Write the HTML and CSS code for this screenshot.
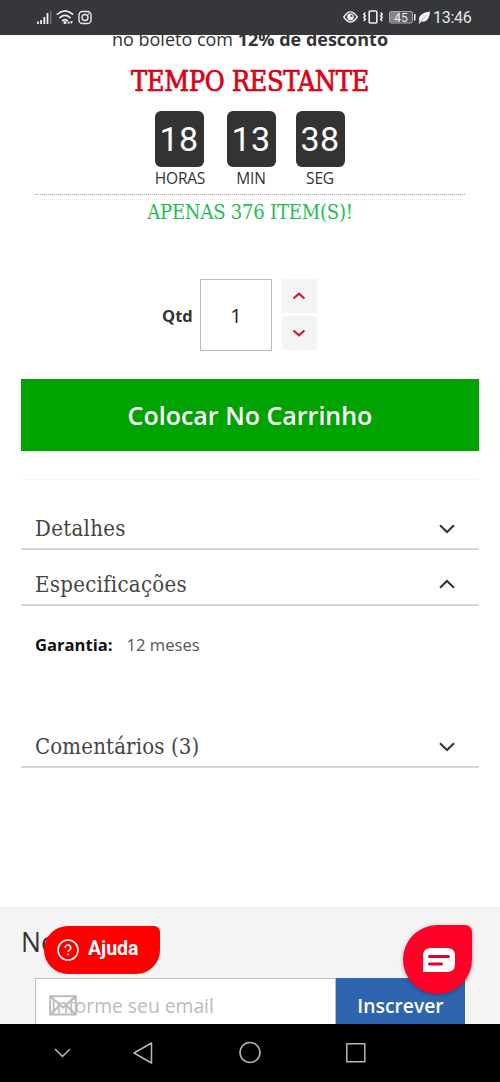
FILE: index.html
```html
<!DOCTYPE html>
<html lang="pt-BR">
<head>
<meta charset="utf-8">
<title>Produto</title>
<link rel="stylesheet" href="styles.css">
</head>
<body>
<div class="phone">
  <header class="status">
    <svg class="status-left" width="56" height="18" viewBox="0 0 56 18" fill="none">
      <g fill="#f2f2f2"><rect x="0" y="12.5" width="1.8" height="2.5"/><rect x="3.2" y="11" width="1.8" height="4"/><rect x="6.4" y="8" width="1.8" height="7"/><rect x="9.6" y="4" width="1.8" height="11"/></g>
      <rect x="13" y="1.500" width="1.400" height="13.500" fill="#707175"/>
      <g stroke="#f2f2f2" stroke-width="1.700" stroke-linecap="round"><path d="M20.500 5.200q7.500-6.600 15 0"/><path d="M23 8.600q5-4.400 10 0"/><path d="M25.700 11.600q2.300-2 4.600 0"/></g>
      <g fill="#f2f2f2"><circle cx="28" cy="13.500" r="1.500"/><path d="M30.200 14.500l1.500-2.500 1.500 2.500zM33 12.200h3l-1.500 2.800z"/></g>
      <g stroke="#ececec" stroke-width="1.400"><rect x="42" y="2.500" width="12" height="12" rx="3.600"/><circle cx="48" cy="8.500" r="3"/></g>
      <circle cx="51.500" cy="5" r=".8" fill="#eee"/>
    </svg>
    <div class="status-right">
      <svg width="88" height="18" viewBox="0 0 88 18" fill="none">
        <path d="M.8 8Q7.500-2.200 14.200 8Q7.500 18.200.8 8z" stroke="#eee" stroke-width="1.400"/><circle cx="7.500" cy="8" r="3.400" fill="#eee"/><circle cx="8.500" cy="7" r="1.100" fill="#36373a"/>
        <rect x="26.200" y="2" width="7.600" height="12" rx="1" stroke="#eee" stroke-width="1.600"/>
        <path d="M22.200 3.500l-1.300 1.700 1.300 1.700-1.300 1.700 1.300 1.700-1.300 1.700M37.800 3.500l1.300 1.700-1.300 1.700 1.300 1.700-1.300 1.700 1.300 1.700" stroke="#eee" stroke-width="1.600"/>
        <rect x="46.500" y="2.500" width="23" height="11.500" rx="1.500" fill="#55565a" stroke="#a4a5a7"/><rect x="47" y="3" width="10" height="10.500" fill="#858689"/>
        <rect x="71" y="5" width="1.500" height="6.500" fill="#eee"/>
        <text class="battery" x="58" y="12.600" text-anchor="middle">45</text>
        <path d="M76.500 13C74.500 7 79 3.500 87 2.500C86.500 9 84 13.500 78.500 12.500L76.200 14.800L75.400 14.100z" fill="#f4f4f4"/><path d="M77.500 12L83.500 6" stroke="#8b8c8e" stroke-width=".6"/>
      </svg>
      <span class="clock">13:46</span>
    </div>
  </header>

  <main class="page">
    <p class="boleto">no boleto com <b>12% de desconto</b></p>
    <h2 class="remaining">TEMPO RESTANTE</h2>
    <div class="countdown">
      <div class="unit hours"><span class="digits">18</span><span class="label">HORAS</span></div>
      <div class="unit minutes"><span class="digits">13</span><span class="label">MIN</span></div>
      <div class="unit seconds"><span class="digits">38</span><span class="label">SEG</span></div>
    </div>
    <p class="stock">APENAS 376 ITEM(S)!</p>

    <div class="quantity">
      <span class="qty-label">Qtd</span>
      <span class="qty-value">1</span>
      <div class="stepper">
        <div class="step"><svg width="14" height="8" viewBox="0 0 14 8"><path d="M1.500 6.500L7 1.700l5.500 4.800"/></svg></div>
        <div class="step"><svg width="14" height="8" viewBox="0 0 14 8"><path d="M1.500 1.500L7 6.300l5.500-4.800"/></svg></div>
      </div>
    </div>
    <div class="add">Colocar No Carrinho</div>

    <section class="tabs">
      <div class="tab"><span class="details">Detalhes</span><svg width="18" height="12" viewBox="0 0 18 12"><path d="M2 3.200L9 10l7-6.800"/></svg></div>
      <div class="tab"><span class="specs">Especificações</span><svg width="18" height="12" viewBox="0 0 18 12"><path d="M2 9.800L9 3l7 6.800"/></svg></div>
      <div class="spec"><b>Garantia:</b><span>12 meses</span></div>
      <div class="tab"><span class="comments">Comentários (3)</span><svg width="18" height="12" viewBox="0 0 18 12"><path d="M2 3.200L9 10l7-6.800"/></svg></div>
    </section>

    <section class="newsletter">
      <h3>Newsletter</h3>
      <div class="form">
        <div class="email">
          <svg class="envelope" width="28" height="21" viewBox="0 0 28 21"><path d="M1.200 1.200h25.600v18.300H1.200zM2 2l12 10.500L26 2M2 19l9-9M26 19l-9-9"/></svg>
          <span>Informe seu email</span>
        </div>
        <div class="subscribe">Inscrever</div>
      </div>
    </section>
  </main>

  <nav class="nav">
    <svg width="500" height="58" viewBox="0 0 500 58">
      <path d="M55 25l7.500 7.500L70 25M151.500 19v20L134 29zM346.800 19.800h18v18h-18z"/><circle cx="250" cy="28.500" r="10"/>
    </svg>
  </nav>

  <div class="help">
    <svg width="22" height="22" viewBox="0 0 22 22"><circle cx="11" cy="11" r="10"/><path d="M8.300 8.800a2.700 2.700 0 1 1 4.400 2q-1.700 1.100-1.700 2.200M11 14.500v1.700"/></svg>
    <span>Ajuda</span>
  </div>
  <div class="chat">
    <svg width="32" height="24" viewBox="0 0 32 24"><path d="M0 24V8q0-8 8-8h16q8 0 8 8v8q0 8-8 8z" fill="#fff"/><path d="M6.500 8.500h19M6.500 16h12" stroke="#e00030" stroke-width="3" stroke-linecap="round"/></svg>
  </div>
</div>
</body>
</html>
```
FILE: styles.css
```css
* { box-sizing: border-box; }
body { margin: 0; font-family: "Open Sans", sans-serif; color: #333; background: #fff; }
p, h2, h3 { margin: 0; font-weight: 400; }
.phone { position: relative; width: 500px; height: 1082px; display: flex; flex-direction: column; overflow: hidden; }

.status { height: 35px; flex: none; background: #36373a; display: flex; justify-content: space-between; padding: 9px 28px 0 37px; }
.status-right { display: flex; gap: 2px; }
.clock { font: 16px/18px Roboto, sans-serif; letter-spacing: -.3px; color: #e8e8e8; width: 39px; white-space: nowrap; }
.battery { font: 12px Roboto, sans-serif; fill: #eee; }

.page { flex: 1; min-height: 0; overflow: hidden; display: flex; flex-direction: column; }
.page > * { flex: none; }
.boleto { height: 26px; margin-top: -9px; line-height: 26px; font-size: 18px; text-align: center; white-space: nowrap; }
.remaining { height: 40px; margin-top: 9px; line-height: 42px; text-align: center; white-space: nowrap; font-family: "DejaVu Serif Condensed", "DejaVu Serif", serif; font-stretch: condensed; font-size: 27px; letter-spacing: -.35px; color: #dc0014; -webkit-text-stroke: .7px #dc0014; }
.countdown { height: 94px; margin: 0 35px; padding-top: 10px; border-bottom: 1px dotted #aaa; display: flex; justify-content: center; gap: 18px; }
.unit { width: 52px; display: flex; flex-direction: column; align-items: center; }
.minutes { margin: 0 -1px 0 1px; }
.hours .digits { margin-right: 2px; }
.digits { width: 49px; height: 56px; border-radius: 6px; background: #333; color: #fff; font: 34px/56px Roboto, sans-serif; letter-spacing: .5px; text-align: center; }
.label { font-size: 15.500px; letter-spacing: -.2px; line-height: 23px; }
.stock { height: 34px; line-height: 34px; text-align: center; font-family: "DejaVu Serif Condensed", "DejaVu Serif", serif; font-stretch: condensed; font-size: 20px; letter-spacing: -.2px; color: #20bd4e; white-space: nowrap; }

.quantity { height: 73px; margin-top: 49px; padding-left: 162px; display: flex; align-items: center; }
.qty-label { width: 38px; padding-top: 2px; font-size: 16.500px; font-weight: 700; }
.qty-value { width: 72px; height: 72px; border: 1px solid #bbb; font-size: 20px; line-height: 71px; text-align: center; color: #222; }
.stepper { margin-left: 9.500px; display: flex; flex-direction: column; gap: 3px; }
.step { width: 35px; height: 34px; background: #f4f4f4; display: flex; align-items: center; justify-content: center; }
.step svg { fill: none; stroke: #cf1236; stroke-width: 2; }
.add { height: 72px; margin: 28px 21px 0; background: #00a300; color: #fff; font-size: 25px; font-weight: 600; line-height: 73px; text-align: center; }

.tabs { margin: 28px 21px 0; border-top: 1px solid #f4f4f4; padding-top: 15px; }
.tab { height: 55px; padding: 13px 23px 0 14px; border-bottom: 2px solid #d6d6d6; display: flex; justify-content: space-between; align-items: center; font-family: "DejaVu Serif Condensed", "DejaVu Serif", serif; font-stretch: condensed; font-size: 22px; color: #444; }
.tab + .tab { height: 56px; padding-top: 14px; }
.details, .specs { letter-spacing: .3px; }
.comments { letter-spacing: .15px; }
.tab svg { fill: none; stroke: #333; stroke-width: 2; }
.spec { height: 107px; padding: 25px 14px 0; font-size: 16.600px; line-height: 28px; display: flex; gap: 14px; }
.spec b { color: #111; }
.spec span { color: #555; }

.newsletter { height: 200px; margin-top: 139px; background: #f4f4f4; padding: 15px 35px 0; }
.newsletter h3 { height: 40px; margin-left: -14px; font-size: 26.500px; line-height: 40px; font-weight: 400; }
.form { margin-top: 16px; height: 56px; display: flex; }
.email { position: relative; width: 301px; border: 1px solid #bbb; background: #fff; padding-left: 15px; font-size: 19.300px; line-height: 54px; color: #bbb; }
.envelope { position: absolute; left: 13px; top: 16px; fill: none; stroke: #bbb; stroke-width: 2; }
.subscribe { width: 129px; background: #2f65ae; color: #fff; font-size: 19.300px; font-weight: 600; line-height: 56px; text-align: center; }

.nav { height: 58px; flex: none; background: #000; }
.nav svg { display: block; fill: none; stroke: #b8b8b8; stroke-width: 1.500; stroke-linejoin: round; }

.help { position: absolute; left: 44px; top: 926px; width: 116px; height: 48px; border-radius: 24px 6px 24px 24px; background: #f00; color: #fff; display: flex; align-items: center; gap: 9px; padding-left: 13px; font: 700 19.500px Roboto, sans-serif; }
.help span { padding-bottom: 3px; }
.help svg { fill: none; stroke: #fff; stroke-width: 1.600; }
.chat { position: absolute; left: 403px; top: 925px; width: 69px; height: 69px; border-radius: 35px 7px 35px 35px; background: #ff0026; box-shadow: 0 1px 4px rgba(0,0,0,.3); display: flex; align-items: center; justify-content: center; padding-left: 3px; }
```
